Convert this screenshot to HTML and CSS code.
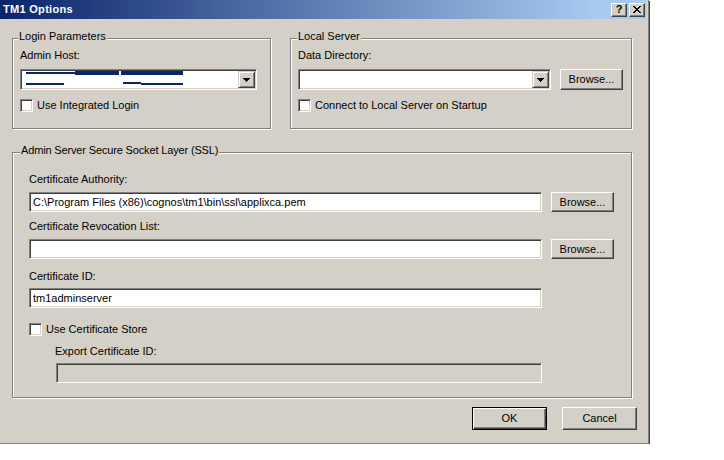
FILE: index.html
```html
<!DOCTYPE html>
<html>
<head>
<meta charset="utf-8">
<title>TM1 Options</title>
<link rel="stylesheet" href="styles.css">
</head>
<body>
<div class="window">
  <div class="titlebar">
    <span class="title">TM1 Options</span>
    <div class="caption-btns">
      <span class="cap-btn cap-help">?</span>
      <span class="cap-btn">
        <svg width="8" height="7" viewBox="0 0 8 7" shape-rendering="crispEdges">
          <g fill="#000">
            <rect x="0" y="0" width="2" height="1"/><rect x="6" y="0" width="2" height="1"/>
            <rect x="1" y="1" width="2" height="1"/><rect x="5" y="1" width="2" height="1"/>
            <rect x="2" y="2" width="4" height="1"/>
            <rect x="3" y="3" width="2" height="1"/>
            <rect x="2" y="4" width="4" height="1"/>
            <rect x="1" y="5" width="2" height="1"/><rect x="5" y="5" width="2" height="1"/>
            <rect x="0" y="6" width="2" height="1"/><rect x="6" y="6" width="2" height="1"/>
          </g>
        </svg>
      </span>
    </div>
  </div>
  <div class="client">
    <div class="top-row">
      <div class="group group-login">
        <span class="group-title title-login">Login Parameters</span>
        <div class="label">Admin Host:</div>
        <div class="combo combo-host">
          <div class="combo-text">
            <svg class="redact" width="170" height="17" viewBox="0 0 170 17" shape-rendering="crispEdges">
              <g fill="#0a246a">
                <rect x="4" y="1" width="49" height="2"/>
                <rect x="53" y="0" width="44" height="4"/>
                <rect x="99" y="0" width="62" height="4"/>
                <rect x="4" y="12" width="38" height="2"/>
                <rect x="101" y="11" width="18" height="2"/>
                <rect x="119" y="12" width="42" height="2"/>
              </g>
            </svg>
          </div>
          <div class="combo-btn">
            <svg width="7" height="4" viewBox="0 0 7 4" shape-rendering="crispEdges"><path d="M0 0h7v1h-1v1h-1v1h-1v1h-1v-1h-1v-1h-1v-1h-1z" fill="#000"/></svg>
          </div>
        </div>
        <div class="check-row">
          <span class="checkbox"></span>
          <span>Use Integrated Login</span>
        </div>
      </div>
      <div class="group group-local">
        <span class="group-title title-local">Local Server</span>
        <div class="label">Data Directory:</div>
        <div class="field-row">
          <div class="combo combo-dir">
            <div class="combo-text"></div>
            <div class="combo-btn">
              <svg width="7" height="4" viewBox="0 0 7 4" shape-rendering="crispEdges"><path d="M0 0h7v1h-1v1h-1v1h-1v1h-1v-1h-1v-1h-1v-1h-1z" fill="#000"/></svg>
            </div>
          </div>
          <div class="btn btn-browse">Browse...</div>
        </div>
        <div class="check-row">
          <span class="checkbox"></span>
          <span>Connect to Local Server on Startup</span>
        </div>
      </div>
    </div>

    <div class="group group-ssl">
      <span class="group-title title-ssl">Admin Server Secure Socket Layer (SSL)</span>
      <div class="label">Certificate Authority:</div>
      <div class="ssl-row">
        <div class="textbox">C:\Program Files (x86)\cognos\tm1\bin\ssl\applixca.pem</div>
        <div class="btn btn-browse btn-ssl">Browse...</div>
      </div>
      <div class="label label-gap">Certificate Revocation List:</div>
      <div class="ssl-row">
        <div class="textbox"></div>
        <div class="btn btn-browse btn-ssl">Browse...</div>
      </div>
      <div class="label label-gap-lg">Certificate ID:</div>
      <div class="textbox textbox-id">tm1adminserver</div>
      <div class="check-row check-store">
        <span class="checkbox"></span>
        <span>Use Certificate Store</span>
      </div>
      <div class="label label-export">Export Certificate ID:</div>
      <div class="textbox textbox-export"></div>
    </div>

    <div class="actions">
      <div class="btn btn-action btn-default">OK</div>
      <div class="btn btn-action">Cancel</div>
    </div>
  </div>
</div>
</body>
</html>
```

FILE: styles.css
```css
* {
  box-sizing: border-box;
}

html, body {
  margin: 0;
  padding: 0;
  background: #fff;
}

body {
  font-family: "Liberation Sans", Arial, "DejaVu Sans", sans-serif;
  font-size: 11px;
  line-height: 13px;
  color: #000;
}

.window {
  width: 649px;
  background: #d4d0c8;
  padding-right: 2px;
  border-right: 1px solid #808080;
  border-bottom: 1px solid #808080;
  box-shadow: 1px 1px 0 #404040;
}

.titlebar {
  height: 19px;
  background: linear-gradient(to right, #0a246a 0%, #a6caf0 92%, #a6caf0 100%);
  display: flex;
  align-items: center;
  justify-content: space-between;
  padding: 0 1px 0 3px;
}

.title {
  color: #fff;
  font-weight: bold;
  letter-spacing: 0.3px;
}

.caption-btns {
  display: flex;
  gap: 2px;
}

.cap-btn {
  width: 16px;
  height: 14px;
  background: #d4d0c8;
  border: 1px solid;
  border-color: #fff #404040 #404040 #fff;
  box-shadow: inset -1px -1px 0 #808080;
  display: flex;
  align-items: center;
  justify-content: center;
  font-weight: bold;
  font-size: 11px;
  line-height: 11px;
}

.cap-help {
  padding-bottom: 1px;
}

.client {
  padding: 19px 9px 13px 12px;
}

.top-row {
  display: flex;
  gap: 19px;
}

.group {
  position: relative;
  border: 1px solid #808080;
  box-shadow: inset 1px 1px 0 #fff, 1px 1px 0 #fff;
}

.group-title {
  position: absolute;
  top: -9px;
  padding: 0 1px;
  background: #d4d0c8;
  white-space: nowrap;
}

.title-login { left: 5px; }
.title-local { left: 6px; }
.title-ssl { left: 7px; letter-spacing: -0.15px; }

.group-login {
  width: 259px;
  padding: 10px 7px 16px 7px;
}

.group-local {
  width: 342px;
  padding: 10px 7px 16px 7px;
}

.label {
  height: 13px;
  white-space: nowrap;
}

.combo {
  height: 21px;
  padding: 1px;
  border: 1px solid;
  border-color: #808080 #fff #fff #808080;
  box-shadow: inset 1px 1px 0 #404040, inset -1px -1px 0 #d4d0c8;
  background: #fff;
  display: flex;
}

.combo-host {
  width: 237px;
  margin-top: 7px;
}

.combo-dir {
  width: 253px;
}

.combo-text {
  flex: 1;
  overflow: hidden;
}

.redact {
  display: block;
}

.combo-btn {
  width: 17px;
  background: #d4d0c8;
  border: 1px solid;
  border-color: #d4d0c8 #404040 #404040 #d4d0c8;
  box-shadow: inset 1px 1px 0 #fff, inset -1px -1px 0 #808080;
  display: flex;
  align-items: center;
  justify-content: center;
}

.field-row {
  display: flex;
  gap: 9px;
  margin-top: 7px;
}

.check-row {
  margin-top: 9px;
  height: 13px;
  display: flex;
  align-items: center;
  gap: 4px;
  white-space: nowrap;
}

.checkbox {
  width: 13px;
  height: 13px;
  flex: none;
  background: #fff;
  border: 1px solid;
  border-color: #808080 #fff #fff #808080;
  box-shadow: inset 1px 1px 0 #404040, inset -1px -1px 0 #d4d0c8;
}

.btn {
  height: 21px;
  background: #d4d0c8;
  border: 1px solid;
  border-color: #fff #404040 #404040 #fff;
  box-shadow: inset -1px -1px 0 #808080;
  display: flex;
  align-items: center;
  justify-content: center;
  white-space: nowrap;
}

.btn-browse {
  width: 63px;
}

.btn-ssl {
  height: 20px;
}

.group-ssl {
  width: 620px;
  margin-top: 23px;
  padding: 20px 17px 14px 16px;
}

.ssl-row {
  display: flex;
  gap: 9px;
  margin-top: 6px;
}

.label-gap {
  margin-top: 8px;
}

.label-gap-lg {
  margin-top: 11px;
}

.textbox {
  width: 513px;
  height: 20px;
  padding: 1px 1px 1px 3px;
  border: 1px solid;
  border-color: #808080 #fff #fff #808080;
  box-shadow: inset 1px 1px 0 #404040, inset -1px -1px 0 #d4d0c8;
  background: #fff;
  line-height: 16px;
  white-space: nowrap;
  overflow: hidden;
}

.textbox-id {
  margin-top: 5px;
}

.check-store {
  margin-top: 15px;
}

.label-export {
  margin-top: 9px;
  margin-left: 26px;
}

.textbox-export {
  margin-top: 5px;
  margin-left: 27px;
  width: 486px;
  background: #d4d0c8;
}

.actions {
  display: flex;
  justify-content: flex-end;
  gap: 15px;
  margin-top: 9px;
}

.btn-action {
  width: 75px;
  height: 23px;
}

.btn-default {
  border: 1px solid #000;
  box-shadow: inset 1px 1px 0 #fff, inset -1px -1px 0 #404040, inset -2px -2px 0 #808080;
}
```
